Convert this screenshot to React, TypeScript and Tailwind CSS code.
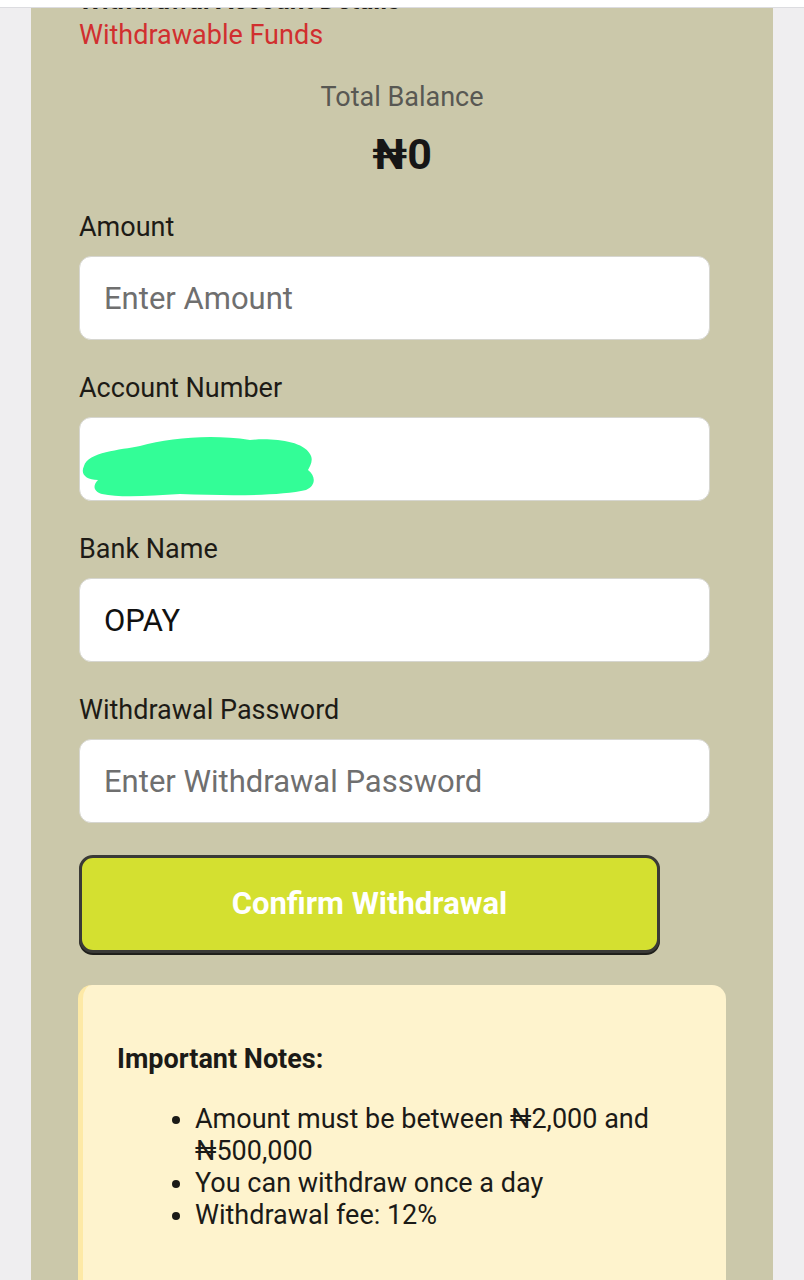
import React from "react";

type FieldProps = {
  label: string;
  placeholder?: string;
  value?: string;
  children?: React.ReactNode;
};

const Field: React.FC<FieldProps> = ({ label, placeholder, value, children }) => {
  return (
    <div className="flex flex-col">
      <label className="text-[27px] leading-[32px] text-[#1d1b16]">{label}</label>
      <div className="relative mt-[13px] h-[84px] w-[631px] rounded-[12px] border border-[#d6d6d0] bg-white">
        <input
          readOnly
          placeholder={placeholder}
          defaultValue={value}
          className="h-full w-full rounded-[12px] bg-transparent px-[24px] text-[31px] text-[#111] outline-none placeholder:text-[#6f6f6f]"
        />
        {children}
      </div>
    </div>
  );
};

const Scribble = () => (
  <svg
    className="pointer-events-none absolute left-0 top-[12px]"
    width="240"
    height="70"
    viewBox="0 0 240 70">
    <path
      d="M4 36 C8 22 40 20 60 16 C90 8 130 4 170 10 C190 8 222 10 230 24 C234 30 230 36 228 40 C236 46 236 56 226 60 C200 66 150 66 100 64 C70 66 40 68 22 64 C14 62 12 56 18 50 C6 50 0 44 4 36 Z"
      fill="#33fd97"
    />
  </svg>
);

export default function App() {
  return (
    <div className="h-[1280px] overflow-hidden bg-[#efeef0] font-['Roboto',sans-serif]">
      <div className="h-[8px] border-b border-[#dcdce0] bg-white" />
      <div className="mx-[31px] h-[1272px] bg-[#cbc8aa] pl-[48px]">
        <div className="flex h-[5px] items-end overflow-hidden">
          <span className="text-[26px] font-bold leading-none text-[#1d1b16]">
            Withdrawal Account Details
          </span>
        </div>
        <p className="mt-[2px] text-[27px] leading-[40px] text-[#d12f2f]">Withdrawable Funds</p>

        <div className="mr-[48px] mt-[26px] flex flex-col items-center">
          <p className="text-[27px] leading-[32px] text-[#585853]">Total Balance</p>
          <p className="mt-[17px] text-[43px] font-bold leading-[48px] text-[#161616]">₦0</p>
        </div>

        <div className="mt-[33px] flex flex-col gap-[32px]">
          <Field label="Amount" placeholder="Enter Amount" />
          <Field label="Account Number">
            <Scribble />
          </Field>
          <Field label="Bank Name" value="OPAY" />
          <Field label="Withdrawal Password" placeholder="Enter Withdrawal Password" />
        </div>

        <button className="mt-[32px] h-[98px] w-[581px] rounded-[14px] border-[3px] border-[#3a3a36] bg-[#d4e030] text-[31px] font-bold text-white shadow-[0_2px_0_#1f1f1a]">
          Confirm Withdrawal
        </button>

        <div className="mt-[32px] h-[320px] w-[648px] -ml-[1px] rounded-[14px] border-l-[5px] border-[#fde9a6] bg-[#fef3cd] pl-[34px] pt-[58px] text-[#1b1a17]">
          <p className="text-[27px] font-bold leading-[32px]">Important Notes:</p>
          <ul className="mt-[28px] list-disc pl-[78px] text-[27px] leading-[32px] marker:text-[#1b1a17]">
            <li>Amount must be between ₦2,000 and ₦500,000</li>
            <li>You can withdraw once a day</li>
            <li>Withdrawal fee: 12%</li>
          </ul>
        </div>
      </div>
    </div>
  );
}
